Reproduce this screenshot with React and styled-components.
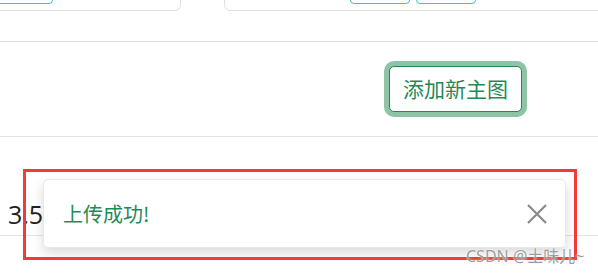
import React from 'react';
import styled, { createGlobalStyle } from 'styled-components';

const GlobalStyle = createGlobalStyle`
  html, body {
    margin: 0;
    padding: 0;
    background: #ffffff;
    overflow: hidden;
  }
  body {
    font-family: "Noto Sans", "Noto Sans CJK SC", sans-serif;
  }
`;

const Page = styled.div`
  position: relative;
  width: 598px;
  height: 274px;
  overflow: hidden;
`;

const TopBar = styled.div`
  display: flex;
  align-items: flex-start;
  height: 41px;
  border-bottom: 1px solid #e3e3e3;
`;

const Card = styled.div`
  box-sizing: border-box;
  display: flex;
  align-items: flex-end;
  gap: 6px;
  height: 41px;
  margin-top: -30px;
  padding-bottom: 6px;
  border: 1px solid #e0e0e0;
  border-radius: 6px;
  margin-left: ${p => p.$offset}px;
  padding-left: ${p => p.$pad}px;
  width: ${p => (p.$width ? `${p.$width}px` : 'auto')};
  flex: ${p => (p.$grow ? 1 : 'none')};
  margin-right: ${p => (p.$grow ? '-10px' : '0')};
`;

const CyanButton = styled.div`
  box-sizing: border-box;
  width: ${p => p.$width}px;
  height: 20px;
  margin-left: ${p => p.$shift || 0}px;
  border: 1px solid #35c2e2;
  border-radius: 4px;
`;

const ActionRow = styled.div`
  display: flex;
  justify-content: flex-end;
  align-items: center;
  height: 94px;
  padding-right: 76px;
  border-bottom: 1px solid #e3e3e3;
`;

const AddButton = styled.button`
  box-sizing: border-box;
  width: 133px;
  height: 46px;
  padding: 0 0 1px;
  border: 1px solid #1e8a58;
  border-radius: 5px;
  background: #ffffff;
  box-shadow: 0 0 0 5px #8ec4a6;
  color: #1e8a58;
  font-family: "Noto Sans CJK SC", sans-serif;
  font-size: 21px;
  line-height: 1;
  cursor: pointer;
`;

const DataRow = styled.div`
  box-sizing: border-box;
  height: 99px;
  padding: 65px 0 0 8px;
  border-bottom: 1px solid #e3e3e3;
`;

const Value = styled.span`
  font-family: "Open Sans", sans-serif;
  font-size: 25px;
  line-height: 1;
  color: #222;
`;

const Toast = styled.div`
  position: absolute;
  left: 43px;
  top: 179px;
  box-sizing: border-box;
  width: 523px;
  height: 69px;
  display: flex;
  align-items: center;
  justify-content: space-between;
  padding: 0 17px 0 19px;
  border: 1px solid #e8e8e8;
  border-radius: 5px;
  background: rgba(255, 255, 255, 0.96);
  box-shadow: 0 5px 12px rgba(0, 0, 0, 0.15);
`;

const ToastText = styled.span`
  font-family: "Noto Sans CJK SC", sans-serif;
  font-size: 20px;
  color: #1e8a58;
`;

const CloseIcon = styled.svg`
  width: 22px;
  height: 22px;
  display: block;
`;

const Annotation = styled.div`
  position: absolute;
  left: 23px;
  top: 169px;
  width: 554px;
  height: 91px;
  box-sizing: border-box;
  border: 3px solid #f23a3a;
  pointer-events: none;
`;

const Watermark = styled.div`
  position: absolute;
  left: 466px;
  top: 245px;
  font-family: "Noto Sans", "Noto Sans CJK SC", sans-serif;
  font-size: 16px;
  line-height: 22px;
  color: rgba(140, 140, 140, 0.85);
  text-shadow: 0 0 2px #fff;
  white-space: nowrap;
`;

export default function App() {
  return (
    <Page>
      <GlobalStyle />
      <TopBar>
        <Card $offset={-10} $pad={0} $width={191}>
          <CyanButton $width={63} $shift={-1} />
        </Card>
        <Card $offset={43} $pad={125} $grow>
          <CyanButton $width={60} />
          <CyanButton $width={60} />
        </Card>
      </TopBar>

      <ActionRow>
        <AddButton>添加新主图</AddButton>
      </ActionRow>

      <DataRow>
        <Value>3.5</Value>
      </DataRow>

      <Toast>
        <ToastText>上传成功!</ToastText>
        <CloseIcon viewBox="0 0 22 22">
          <path d="M2 2 L20 20 M20 2 L2 20" stroke="#8a8a8a" strokeWidth="2.2" fill="none" />
        </CloseIcon>
      </Toast>

      <Annotation />
      <Watermark>CSDN @土味儿~</Watermark>
    </Page>
  );
}
